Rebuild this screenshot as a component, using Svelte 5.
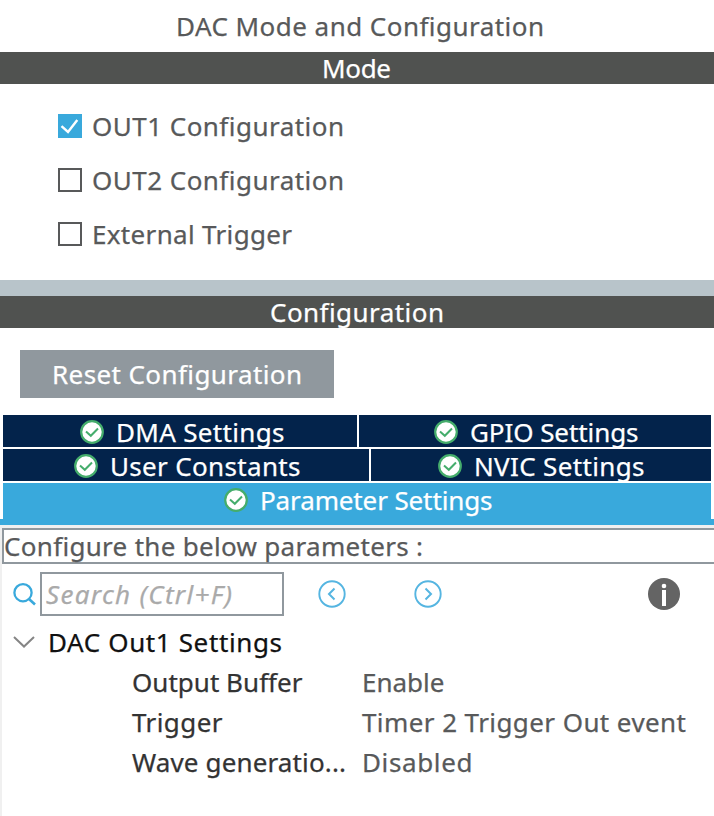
<script>
  const modes = [
    { label: 'OUT1 Configuration', width: 252, checked: true },
    { label: 'OUT2 Configuration', width: 252, checked: false },
    { label: 'External Trigger', width: 200, checked: false }
  ];
  const tabRows = [
    [
      { label: 'DMA Settings', width: 168.5, lead: 77, size: 354 },
      { label: 'GPIO Settings', width: 168.5, lead: 75, size: 352 }
    ],
    [
      { label: 'User Constants', width: 190.5, lead: 71, size: 366 },
      { label: 'NVIC Settings', width: 170.5, lead: 67, size: 340 }
    ]
  ];
  const params = [
    { name: 'Output Buffer', nameWidth: 170.5, value: 'Enable', valueWidth: 82.5 },
    { name: 'Trigger', nameWidth: 90.5, value: 'Timer 2 Trigger Out event', valueWidth: 324 },
    { name: 'Wave generatio...', nameWidth: 214, value: 'Disabled', valueWidth: 110.5 }
  ];

  // Spreads the letters so that a label fills the given width.
  function fit(node, width) {
    node.style.letterSpacing = '0px';
    const natural = node.getBoundingClientRect().width;
    const spacing = (width - natural) / (node.textContent.length - 1);
    node.style.letterSpacing = spacing + 'px';
    node.style.marginRight = -spacing + 'px';
  }
</script>

{#snippet okIcon()}
  <svg class="ok" width="24" height="24" viewBox="0 0 24 24">
    <circle cx="12" cy="12" r="10.8" fill="#fff" stroke="#45ad6c" stroke-width="2.2" />
    <path d="M6 11.5 L10.8 15.8 L18 8.5" fill="none" stroke="#45ad6c" stroke-width="2" />
  </svg>
{/snippet}

<main>
  <h1><span use:fit={368}>DAC Mode and Configuration</span></h1>
  <h2 class="mode-title"><span use:fit={69}>Mode</span></h2>
  <section class="modes">
    {#each modes as mode}
      <div class="option">
        <span class="box" class:checked={mode.checked}>
          {#if mode.checked}
            <svg width="24" height="24" viewBox="0 0 24 24">
              <path d="M3.5 12.2 L10 18 L19.3 6" fill="none" stroke="#fff" stroke-width="2.4" />
            </svg>
          {/if}
        </span>
        <span use:fit={mode.width}>{mode.label}</span>
      </div>
    {/each}
  </section>
  <div class="splitter"></div>
  <h2 class="config-title"><span use:fit={174}>Configuration</span></h2>
  <div class="actions">
    <button><span use:fit={250}>Reset Configuration</span></button>
  </div>
  <nav>
    {#each tabRows as row}
      <div class="tab-row">
        {#each row as tab}
          <div class="tab" style="width: {tab.size}px; padding-left: {tab.lead}px">
            {@render okIcon()}
            <span use:fit={tab.width}>{tab.label}</span>
          </div>
        {/each}
      </div>
    {/each}
    <div class="tab active">
      {@render okIcon()}
      <span use:fit={232.5}>Parameter Settings</span>
    </div>
  </nav>
  <div class="rule"></div>
  <section class="panel">
    <div class="hint"><span use:fit={419}>Configure the below parameters :</span></div>
    <div class="toolbar">
      <svg class="find" width="26" height="28" viewBox="0 0 26 28">
        <circle cx="11" cy="12.7" r="8.6" fill="none" stroke="#39a9dc" stroke-width="2.3" />
        <path d="M17 19 L23 24.5" stroke="#39a9dc" stroke-width="2.6" />
      </svg>
      <div class="search"><span use:fit={186}>Search (Ctrl+F)</span></div>
      <svg class="prev" width="28" height="28" viewBox="0 0 28 28">
        <circle cx="14" cy="14" r="12.7" fill="none" stroke="#55b5e1" stroke-width="1.9" />
        <path d="M16.5 8.5 L11 14 L16.5 19.5" fill="none" stroke="#55b5e1" stroke-width="2" />
      </svg>
      <svg class="next" width="28" height="28" viewBox="0 0 28 28">
        <circle cx="14" cy="14" r="12.7" fill="none" stroke="#55b5e1" stroke-width="1.9" />
        <path d="M11.5 8.5 L17 14 L11.5 19.5" fill="none" stroke="#55b5e1" stroke-width="2" />
      </svg>
      <svg class="info" width="32" height="32" viewBox="0 0 32 32">
        <circle cx="16" cy="16" r="16" fill="#646464" />
        <circle cx="16" cy="8" r="2.3" fill="#fff" />
        <path d="M14 12h4v16h-4z" fill="#fff" />
      </svg>
    </div>
    <div class="group">
      <svg width="24" height="16" viewBox="0 0 24 16">
        <path d="M2 3 L12 12.5 L22 3" fill="none" stroke="#858585" stroke-width="2" />
      </svg>
      <span use:fit={234}>DAC Out1 Settings</span>
    </div>
    {#each params as param}
      <div class="param">
        <div class="name"><span use:fit={param.nameWidth}>{param.name}</span></div>
        <div class="value"><span use:fit={param.valueWidth}>{param.value}</span></div>
      </div>
    {/each}
  </section>
</main>

<style>
  :global(body) {
    background: #fff;
  }
  main {
    box-sizing: border-box;
    width: 714px;
    height: 816px;
    display: flex;
    flex-direction: column;
    overflow: hidden;
    background: #fff;
    color: #58595a;
    font: 26px 'Noto Sans', sans-serif;
    white-space: nowrap;
    -webkit-text-stroke: 0.25px currentColor;
  }
  span {
    flex: none;
  }
  svg {
    display: block;
    flex: none;
  }
  h1,
  h2 {
    margin: 0;
    display: flex;
    box-sizing: border-box;
    flex: none;
    font-size: inherit;
    font-weight: 400;
  }
  h1 {
    height: 52px;
    line-height: 52px;
    padding-left: 176px;
  }
  h2 {
    height: 32px;
    line-height: 32px;
    background: #505250;
    color: #fff;
  }
  .mode-title {
    padding-left: 322px;
  }
  .config-title {
    padding-left: 270px;
  }
  .modes {
    box-sizing: border-box;
    flex: none;
    height: 196px;
    padding: 15px 0 0 58px;
  }
  .option {
    display: flex;
    align-items: center;
    gap: 10px;
    height: 54px;
    line-height: 54px;
  }
  .box {
    box-sizing: border-box;
    width: 24px;
    height: 24px;
    border: 2px solid #58595a;
  }
  .box.checked {
    border: 0;
    background: #39a9dc;
  }
  .splitter {
    flex: none;
    height: 16px;
    background: #b8c4ca;
  }
  .actions {
    flex: none;
    display: flex;
    padding: 22px 20px 17px;
  }
  button {
    box-sizing: border-box;
    display: flex;
    width: 314px;
    height: 48px;
    border: 0;
    padding: 0 0 0 32px;
    background: #90989e;
    color: #fff;
    font: inherit;
    line-height: 48px;
  }
  nav {
    flex: none;
    display: flex;
    flex-direction: column;
    gap: 2px;
    padding: 0 3px;
  }
  .tab-row {
    display: flex;
    gap: 2px;
  }
  .tab {
    box-sizing: border-box;
    display: flex;
    gap: 12px;
    height: 32px;
    line-height: 34px;
    background: #03234b;
    color: #fff;
  }
  .tab.active {
    height: 36px;
    padding-left: 221px;
    background: #39a9dc;
  }
  .ok {
    margin-top: 5px;
  }
  .rule {
    flex: none;
    height: 6px;
    background: #39a9dc;
  }
  .panel {
    flex: 1;
    border-left: 2px solid #f0f0f0;
    border-top: 3px solid #f0f0f0;
  }
  .hint {
    box-sizing: border-box;
    display: flex;
    height: 36px;
    line-height: 32px;
    border: 2px solid #90989e;
    border-right: 0;
  }
  .toolbar {
    display: flex;
    align-items: center;
    height: 44px;
    padding: 8px 0 6px 10px;
  }
  .search {
    box-sizing: border-box;
    display: flex;
    width: 244px;
    height: 44px;
    margin-left: 2px;
    padding-left: 4px;
    border: 2px solid #90989e;
    color: #aaa;
    font-style: italic;
    line-height: 40px;
  }
  .prev {
    margin-left: 34px;
  }
  .next {
    margin-left: 68px;
  }
  .info {
    margin-left: 206px;
  }
  .group {
    display: flex;
    align-items: center;
    gap: 12px;
    height: 40px;
    padding-left: 10px;
    color: #111;
    line-height: 40px;
  }
  .param {
    display: flex;
    height: 40px;
    line-height: 40px;
  }
  .name {
    display: flex;
    box-sizing: border-box;
    width: 360px;
    padding-left: 130px;
    color: #333;
  }
  .value {
    display: flex;
  }
</style>
